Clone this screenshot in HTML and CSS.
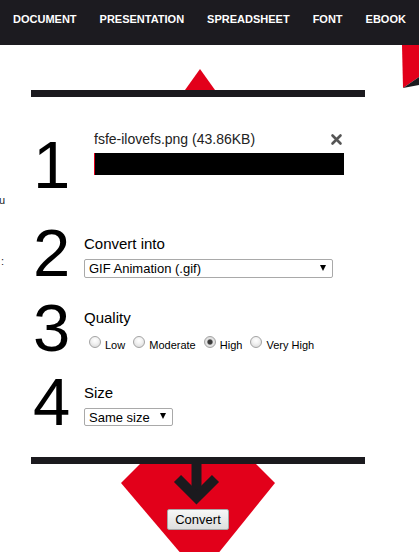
FILE: index.html
```html
<!DOCTYPE html>
<html lang="en">
<head>
    <meta charset="UTF-8">
    <meta name="viewport" content="width=device-width, initial-scale=1.0">
    <title>Image Converter</title>
    <link rel="stylesheet" href="styles.css">
</head>
<body>
    <nav class="topnav">
        <a href="#">DOCUMENT</a>
        <a href="#">PRESENTATION</a>
        <a href="#">SPREADSHEET</a>
        <a href="#">FONT</a>
        <a href="#">EBOOK</a>
    </nav>

    <div class="stage">
        <aside class="side-edge">
            <span class="edge-u">u</span>
            <span class="edge-colon">:</span>
        </aside>

        <form class="converter">
            <div class="peak"></div>

            <div class="panel">
                <!-- passo 1: arquivo enviado -->
                <div class="step step-file">
                    <div class="step-num">1</div>
                    <div class="step-body">
                        <div class="file-head">
                            <span class="file-name">fsfe-ilovefs.png (43.86KB)</span>
                            <button type="button" class="file-remove">
                                <svg width="13" height="13" viewBox="0 0 13 13">
                                    <path d="M2.5 2.5 L10.5 10.5 M10.5 2.5 L2.5 10.5" stroke="#555" stroke-width="2.6" stroke-linecap="round" fill="none"/>
                                </svg>
                            </button>
                        </div>
                        <div class="progress"></div>
                    </div>
                </div>

                <!-- passo 2: formato -->
                <div class="step">
                    <div class="step-num">2</div>
                    <div class="step-body">
                        <div class="label">Convert into</div>
                        <span class="select-wrap select-format">
                            <select>
                                <option>GIF Animation (.gif)</option>
                            </select>
                        </span>
                    </div>
                </div>

                <!-- passo 3: qualidade -->
                <div class="step">
                    <div class="step-num">3</div>
                    <div class="step-body">
                        <div class="label">Quality</div>
                        <div class="quality">
                            <label><input type="radio" name="quality">Low</label>
                            <label><input type="radio" name="quality">Moderate</label>
                            <label><input type="radio" name="quality" checked>High</label>
                            <label><input type="radio" name="quality">Very High</label>
                        </div>
                    </div>
                </div>

                <!-- passo 4: tamanho -->
                <div class="step">
                    <div class="step-num">4</div>
                    <div class="step-body">
                        <div class="label">Size</div>
                        <span class="select-wrap select-size">
                            <select>
                                <option>Same size</option>
                            </select>
                        </span>
                    </div>
                </div>
            </div>

            <div class="submit">
                <svg class="arrow" width="50" height="44" viewBox="0 0 50 44">
                    <path d="M23.5 0 V33" stroke="#1b1a1e" stroke-width="10" fill="none"/>
                    <path d="M4.5 14.5 L23.5 33.5 L42.5 14.5" stroke="#1b1a1e" stroke-width="10" stroke-linejoin="miter" fill="none"/>
                </svg>
                <button type="submit" class="convert-btn">Convert</button>
            </div>
        </form>

        <div class="corner">
            <svg width="17" height="44" viewBox="0 0 17 44">
                <polygon points="0,0 17,0 17,32 1,43" fill="#e2001a"/>
                <polygon points="1,43 17,32 17,40" fill="#1b1a1e"/>
            </svg>
        </div>
    </div>
</body>
</html>
```

FILE: styles.css
```css
html, body {
    margin: 0;
    height: 100%;
    overflow: hidden; /* sem rolagem */
}

body {
    font-family: "Liberation Sans", Arial, sans-serif;
    background: #fff;
    color: #000;
}

/* barra de navegação */
.topnav {
    height: 45px;
    box-sizing: border-box;
    padding: 13px 0 0 13px;
    background: #1c1b20;
    display: flex;
    gap: 23px;
}

.topnav a {
    color: #fff;
    font-size: 11px;
    font-weight: bold;
    line-height: 13px;
    text-decoration: none;
}

.stage {
    display: flex;
    align-items: flex-start;
}

/* restos de texto cortados na borda esquerda */
.side-edge {
    width: 31px;
    flex-shrink: 0;
    padding-top: 148.7px;
    font-size: 11px;
    line-height: 13px;
    color: #222;
    display: flex;
    flex-direction: column;
}

.edge-u { margin-left: -1px; }
.edge-colon { margin-top: 48px; margin-left: 1px; }

.converter {
    width: 334px;
    flex-shrink: 0;
    margin: 0;
}

.peak {
    width: 0;
    height: 0;
    margin: 24px 0 0 154px;
    border-left: 15px solid transparent;
    border-right: 15px solid transparent;
    border-bottom: 21px solid #e2001a;
}

.panel {
    position: relative;
    background: #fff;
    border-top: 7px solid #1b1a1e;
    border-bottom: 7px solid #1b1a1e;
    padding: 34px 0 22px 2px;
}

.step {
    display: flex;
    align-items: flex-start;
    margin-bottom: 7.5px;
}

.step:last-child { margin-bottom: 0; }

.step-num {
    width: 51px;
    flex-shrink: 0;
    font-size: 67px;
    line-height: 67px;
}

.step-body {
    padding-top: 15.5px;
}

.step-file { margin-bottom: 21px; }

.step-file .step-body {
    padding: 0 0 0 10px;
}

.file-head {
    width: 250px;
    display: flex;
    justify-content: space-between;
    align-items: center;
    font-size: 14px;
    line-height: 17px;
    color: #222;
}

.file-remove {
    width: 13px;
    height: 13px;
    margin-right: 1px;
    padding: 0;
    border: 0;
    background: none;
    display: block;
}

.file-remove svg { display: block; }

.progress {
    width: 250px;
    height: 22px;
    margin-top: 5px;
    box-sizing: border-box;
    background: #000;
    border-left: 1px solid #e2001a;
}

.label {
    font-size: 15px;
    line-height: 18px;
}

/* selects com seta desenhada */
.select-wrap {
    position: relative;
    display: block;
    margin-top: 6px;
}

.select-wrap select {
    appearance: none;
    -webkit-appearance: none;
    display: block;
    width: 100%;
    box-sizing: border-box;
    margin: 0;
    border: 1px solid #a9a9a9;
    border-radius: 2px;
    padding: 0 20px 0 4px;
    background: #fff;
    color: #000;
    font: 13px "Liberation Sans", Arial, sans-serif;
}

.select-wrap::after {
    content: "";
    position: absolute;
    right: 7px;
    top: 6px;
    border-left: 3px solid transparent;
    border-right: 3px solid transparent;
    border-top: 6px solid #000;
    pointer-events: none;
}

.select-format { width: 249px; }
.select-format select { height: 19px; }

.select-size { width: 89px; margin-top: 6.5px; }
.select-size select { height: 18px; }
.select-size::after { top: 5px; }

/* opções de qualidade */
.quality {
    margin-top: 8.5px;
    font-size: 11px;
    line-height: 19px;
    white-space: nowrap;
}

.quality input {
    appearance: none;
    -webkit-appearance: none;
    display: inline-block;
    width: 12px;
    height: 12px;
    box-sizing: border-box;
    margin: 0 4px 0 5px;
    border: 1px solid #a3a3a3;
    border-radius: 50%;
    background: radial-gradient(circle at 50% 35%, #fff 0, #f2f2f2 40%, #d4d4d4 100%);
    vertical-align: 1px;
}

.quality input:checked {
    background: radial-gradient(circle, #3a3a3a 0, #3a3a3a 2px, #8a8a8a 2.6px, #e6e6e6 3.2px, #d0d0d0 100%);
}

/* área do botão converter */
.submit {
    position: relative;
    height: 112px;
    display: flex;
    flex-direction: column;
    align-items: center;
}

.submit::before {
    content: "";
    position: absolute;
    inset: 0;
    background: #e2001a;
    clip-path: polygon(109px 0, 225px 0, 244px 19px, 169px 112px, 90px 19px);
}

.arrow {
    position: relative;
    display: block;
}

.convert-btn {
    position: relative;
    margin-top: 1px;
    height: 21px;
    padding: 0 7px;
    border: 1px solid #a6a6a6;
    border-radius: 2px;
    background: linear-gradient(#f7f7f7, #dedede);
    color: #000;
    font: 13px "Liberation Sans", Arial, sans-serif;
}

.corner {
    margin-left: auto;
    width: 17px;
    height: 44px;
}

.corner svg { display: block; }
```
